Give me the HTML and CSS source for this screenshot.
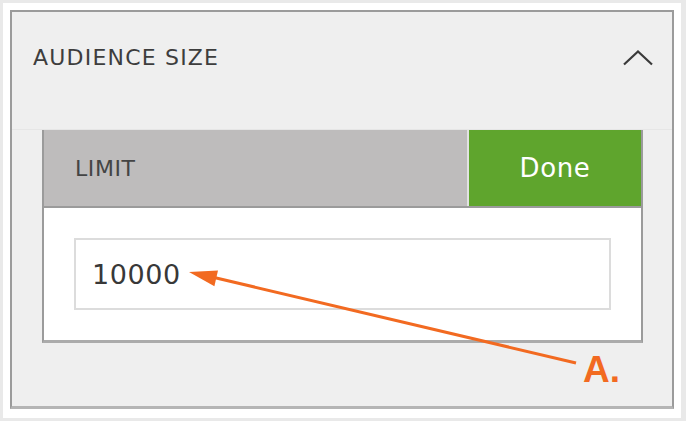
FILE: index.html
```html
<!DOCTYPE html>
<html>
<head>
<meta charset="utf-8">
<link rel="stylesheet" href="styles.css">
</head>
<body>
<div class="frame">
  <section class="panel">
    <header class="panel-head">
      <h2 class="panel-title">AUDIENCE SIZE</h2>
      <svg class="chevron" width="30" height="16" viewBox="0 0 30 16"><polyline points="1,14.5 15,1.5 29,14.5" fill="none" stroke="#3a3a3a" stroke-width="2.2"/></svg>
    </header>
    <div class="panel-body">
      <div class="card">
        <div class="card-head">
          <span class="card-label">LIMIT</span>
          <button class="done">Done</button>
        </div>
        <div class="card-body">
          <div class="field">10000</div>
        </div>
      </div>
    </div>
  </section>
  <svg class="callout" width="686" height="421" viewBox="0 0 686 421">
    <line x1="576" y1="363" x2="212" y2="277" stroke="#f26a21" stroke-width="3"/>
    <polygon points="189,272 218,270.6 214.4,286.2" fill="#f26a21"/>
  </svg>
  <span class="callout-label">A.</span>
</div>
</body>
</html>
```
FILE: styles.css
```css
* { box-sizing: border-box; }
html, body { margin: 0; padding: 0; background: #fff; }
.frame {
  position: relative;
  width: 686px;
  height: 421px;
  border: 3px solid #e9e9e9;
  border-right-width: 5px;
  padding: 7px 7px 7px 7px;
  background: #fff;
  font-family: "DejaVu Sans", "Open Sans", sans-serif;
}
.panel {
  width: 664px;
  height: 399px;
  border: 2px solid #9b9b9b;
  border-bottom: 3px solid #b5b5b5;
  background: #efefef;
  display: flex;
  flex-direction: column;
}
.panel-head {
  height: 117px;
  display: flex;
  align-items: flex-start;
  justify-content: space-between;
  padding: 33px 19px 0 21px;
}
.panel-title {
  margin: 0;
  font-size: 22px;
  font-weight: 400;
  letter-spacing: 1.2px;
  color: #3d3d3d;
  line-height: 26px;
}
.chevron { margin-top: 5px; display: block; }
.panel-body {
  flex: 1;
  border-top: 1px solid #e6e6e6;
  padding: 0 29px 0 30px;
}
.card {
  border: 2px solid #9b9b9b;
  border-top: 0;
  border-bottom: 3px solid #ababab;
  background: #fff;
}
.card-head {
  height: 78px;
  display: flex;
  border-bottom: 2px solid #9b9b9b;
}
.card-label {
  flex: 1;
  background: #bebcbc;
  border-right: 2px solid #e2e2e2;
  padding-left: 31px;
  padding-top: 1px;
  display: flex;
  align-items: center;
  font-size: 22px;
  letter-spacing: 0.6px;
  color: #444;
}
.done {
  width: 172px;
  border: 0;
  margin: 0;
  background: #5fa52d;
  color: #fff;
  font-family: inherit;
  font-size: 26px;
  letter-spacing: 0.6px;
  padding: 0;
}
.card-body { padding: 30px; }
.field {
  height: 72px;
  border: 2px solid #dcdcdc;
  padding-left: 16px;
  display: flex;
  align-items: center;
  font-size: 27px;
  letter-spacing: 0.6px;
  color: #383838;
}
.callout {
  position: absolute;
  left: -3px;
  top: -3px;
  pointer-events: none;
}
.callout-label {
  position: absolute;
  left: 580px;
  top: 348px;
  font-family: "Liberation Sans", Arial, sans-serif;
  font-weight: 700;
  font-size: 37px;
  line-height: 37px;
  color: #f26a21;
}
```
